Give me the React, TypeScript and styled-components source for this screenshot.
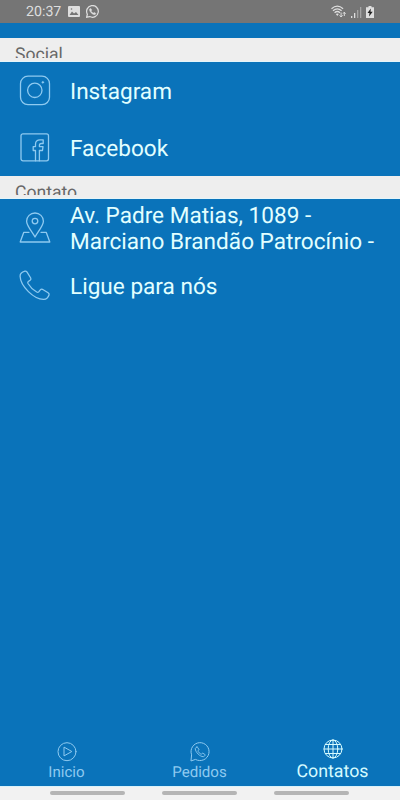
import React from 'react';
import styled, { createGlobalStyle } from 'styled-components';

const GlobalStyle = createGlobalStyle`
  * { box-sizing: border-box; }
  body {
    margin: 0;
    background: #0a73ba;
    font-family: Roboto, sans-serif;
    text-rendering: geometricPrecision;
  }
  svg { display: block; flex: none; }
`;

const Screen = styled.div`
  width: 400px;
  height: 800px;
  display: flex;
  flex-direction: column;
  background: #0a73ba;
  overflow: hidden;
`;

const StatusBar = styled.header`
  height: 23px;
  flex: none;
  display: flex;
  align-items: center;
  justify-content: space-between;
  padding: 0 26px 0 26px;
  background: #757575;
  color: #dedede;
`;

const StatusGroup = styled.div<{ $gap: number }>`
  display: flex;
  align-items: center;
  gap: ${(p) => p.$gap}px;
`;

const Clock = styled.span`
  width: 36px;
  font-size: 14.2px;
  line-height: 21px;
  padding-top: 2px;
  white-space: nowrap;
`;

const Content = styled.main`
  flex: 1;
  padding-top: 15px;
`;

const SectionTitle = styled.h2<{ $height: number }>`
  height: ${(p) => p.$height}px;
  margin: 0;
  padding: 6px 15px 0;
  background: #eee;
  border-bottom: 1px solid #e4f5fa;
  color: #686868;
`;

const TitleClip = styled.span<{ $height: number }>`
  display: block;
  height: ${(p) => p.$height}px;
  overflow: hidden;
  font-size: 17.6px;
  font-weight: 400;
  line-height: 22px;
`;

const Row = styled.div<{ $height: number }>`
  height: ${(p) => p.$height}px;
  display: flex;
  align-items: center;
  padding-left: 19px;
  gap: 19px;
  color: #8fcaf0;
`;

const RowLabel = styled.span`
  color: #e2ffff;
  font-size: 22.6px;
  line-height: 26px;
  padding-top: 2px;
  white-space: pre-line;
`;

const TabBar = styled.nav`
  height: 54px;
  flex: none;
  display: grid;
  grid-template-columns: repeat(3, 133px);
`;

const Tab = styled.div<{ $active?: boolean }>`
  display: flex;
  flex-direction: column;
  align-items: center;
  padding-top: ${(p) => (p.$active ? 7 : 10)}px;
  gap: ${(p) => (p.$active ? 3 : 0)}px;
  color: ${(p) => (p.$active ? '#d5fbff' : '#8fcaf0')};
  font-size: ${(p) => (p.$active ? 17.8 : 15.1)}px;
  line-height: 20px;
`;

const SystemNav = styled.footer`
  height: 14px;
  flex: none;
  display: flex;
  justify-content: center;
  gap: 37px;
  padding: 4px 1px 0 0;
  background: #f2f2f2;
  border-top: 1px solid #d9f2fa;
`;

const NavHandle = styled.i`
  width: 75px;
  height: 4px;
  border-radius: 2px;
  background: #b5b5b5;
`;

type LineIconProps = {
  width?: number;
  height?: number;
  box?: string;
  stroke?: number;
  children: React.ReactNode;
};

const LineIcon = ({ width = 32, height = 32, box = '0 0 32 32', stroke = 1.3, children }: LineIconProps) => (
  <svg width={width} height={height} viewBox={box} fill="none" stroke="currentColor" strokeWidth={stroke} strokeLinejoin="round" strokeLinecap="round">
    {children}
  </svg>
);

const InstagramIcon = () => (
  <LineIcon>
    <rect x="1.5" y="1.2" width="29" height="28.5" rx="7.5" />
    <circle cx="15.8" cy="15.3" r="7.2" />
    <circle cx="23.8" cy="7.3" r="0.9" fill="currentColor" strokeWidth=".6" />
  </LineIcon>
);

const FacebookIcon = () => (
  <LineIcon>
    <rect x="2" y="1.8" width="27.500" height="27" rx="2" />
    <path d="M16.500 28.800V18.500H14.200V14.600H16.500V12.200C16.500 9.200 18.300 7.800 21 7.800H24.200V11.500H22.300C20.800 11.500 20.400 12.200 20.400 13.400V14.600H24L23.500 18.500H20.400V28.800" />
  </LineIcon>
);

const MapPinIcon = () => (
  <LineIcon box="0 .5 32 32">
    <path d="M16 25.500C13.600 21 7.600 14.200 7.600 9.700A8.400 8.200 0 0 1 24.400 9.700C24.400 14.200 18.400 21 16 25.500Z" />
    <circle cx="16" cy="9.600" r="2.800" />
    <path d="M10 20.800H4.800L1.200 30.500H30.800L27.200 20.800H22" />
  </LineIcon>
);

const handset =
  'M6.200 1.600C4 2.200 1.300 4.200 1.400 6.800C1.600 11.500 5 17.500 9.700 22.100C14.500 26.800 20 29.800 24.800 29.900C27.300 30 29.600 27.600 30.400 25.200C30.700 24.300 30.100 23.700 29.400 23.200L23.700 19.800C22.800 19.400 22.200 19.600 21.600 20.300L20 22.400C19.400 23 18.800 23 18 22.500C14.900 20.800 11.200 17.200 9.300 14C8.800 13.100 8.900 12.600 9.600 12L11.700 10.400C12.300 9.900 12.400 9.300 12 8.500L8.200 2.400C7.600 1.600 7 1.400 6.200 1.600Z';

const PhoneIcon = () => (
  <LineIcon box=".3 .5 32 32">
    <path d={handset} />
  </LineIcon>
);

const PlayIcon = () => (
  <LineIcon width={20} height={20} box="0 0 20 20" stroke={1}>
    <circle cx="10" cy="9.700" r="9" />
    <path d="M7 5.500v8.400L14.500 9.700Z" />
  </LineIcon>
);

const ChatIcon = () => (
  <LineIcon width={20} height={20} box="0 0 20 20" stroke={1}>
    <path d="M1 18.600L1.600 12.800A9 9 0 1 1 5.800 17.600Z" />
    <path transform="translate(4.800 4.500) scale(.34)" strokeWidth="2.700" d={handset} />
  </LineIcon>
);

const GlobeIcon = () => (
  <LineIcon width={20} height={20} box="0 0 20 20" stroke={1}>
    <circle cx="10" cy="10" r="9" />
    <ellipse cx="10" cy="10" rx="4.800" ry="9" />
    <path d="M10 1v18M1 10h18M2.300 5.500h15.400M2.300 14.500h15.400" />
  </LineIcon>
);

const PictureIcon = () => (
  <svg width="12" height="11" viewBox="0 0 12 11">
    <rect width="12" height="11" rx="1" fill="currentColor" />
    <path d="M1.500 9L4 5.500L6 7.500L8 6L10.500 9Z" fill="#757575" />
    <circle cx="3.500" cy="3" r=".8" fill="#757575" />
  </svg>
);

const WhatsAppIcon = () => (
  <svg width="13" height="13" viewBox="0 0 20 20" fill="none" stroke="currentColor" strokeWidth="1.900">
    <path d="M1 18.800L2.100 14.200A9 9 0 1 1 5.800 17.800Z" />
    <path transform="translate(4.800 4.700) scale(.34)" fill="currentColor" d={handset} />
  </svg>
);

const WifiIcon = () => (
  <svg width="16" height="13" viewBox="0 0 16 13" fill="none" stroke="currentColor" strokeWidth="1.200">
    <path d="M.5 3.800Q6.300-1.400 12.100 3.800M2 5.800Q6.300 1.800 10.600 5.800M3.600 7.700Q6.300 5.300 9 7.700" />
    <path d="M4.800 9Q6.300 7.800 7.800 9L6.300 11Z" fill="currentColor" stroke="none" />
    <path d="M10.100 7.500v4.500M8.600 10.400l1.500 1.600l1.500-1.600M13.300 11V7.200M12 8.700l1.300-1.500l1.300 1.500" strokeWidth="1" />
  </svg>
);

const SignalIcon = () => (
  <svg width="11" height="12" viewBox="0 0 11 12" fill="currentColor">
    <path d="M0 10h1.300v2H0zM3 7h1.300v5H3z" />
    <path d="M6 4h1.300v8H6zM9 1h1.300v11H9z" opacity=".45" />
  </svg>
);

const BatteryIcon = () => (
  <svg width="8" height="12" viewBox="0 0 8 12">
    <path d="M2.500 0h3v1.200H8V12H0V1.200h2.500Z" fill="currentColor" />
    <path d="M4.800 2.500L1.500 7h2L3 10.500L6.700 5.800H4.500Z" fill="#202020" />
  </svg>
);

export default function App() {
  return (
    <>
      <GlobalStyle />
      <Screen>
        <StatusBar>
          <StatusGroup $gap={6}>
            <Clock>20:37</Clock>
            <PictureIcon />
            <WhatsAppIcon />
          </StatusGroup>
          <StatusGroup $gap={4}>
            <WifiIcon />
            <SignalIcon />
            <BatteryIcon />
          </StatusGroup>
        </StatusBar>
        <Content>
          <SectionTitle $height={24}><TitleClip $height={14}>Social</TitleClip></SectionTitle>
          <Row $height={57}><InstagramIcon /><RowLabel>Instagram</RowLabel></Row>
          <Row $height={57}><FacebookIcon /><RowLabel>Facebook</RowLabel></Row>
          <SectionTitle $height={23}><TitleClip $height={13}>Contato</TitleClip></SectionTitle>
          <Row $height={58}>
            <MapPinIcon />
            <RowLabel>{'Av. Padre Matias, 1089 -\nMarciano Brandão Patrocínio -'}</RowLabel>
          </Row>
          <Row $height={57}><PhoneIcon /><RowLabel>Ligue para nós</RowLabel></Row>
        </Content>
        <TabBar>
          <Tab><PlayIcon />Inicio</Tab>
          <Tab><ChatIcon />Pedidos</Tab>
          <Tab $active><GlobeIcon />Contatos</Tab>
        </TabBar>
        <SystemNav><NavHandle /><NavHandle /><NavHandle /></SystemNav>
      </Screen>
    </>
  );
}
